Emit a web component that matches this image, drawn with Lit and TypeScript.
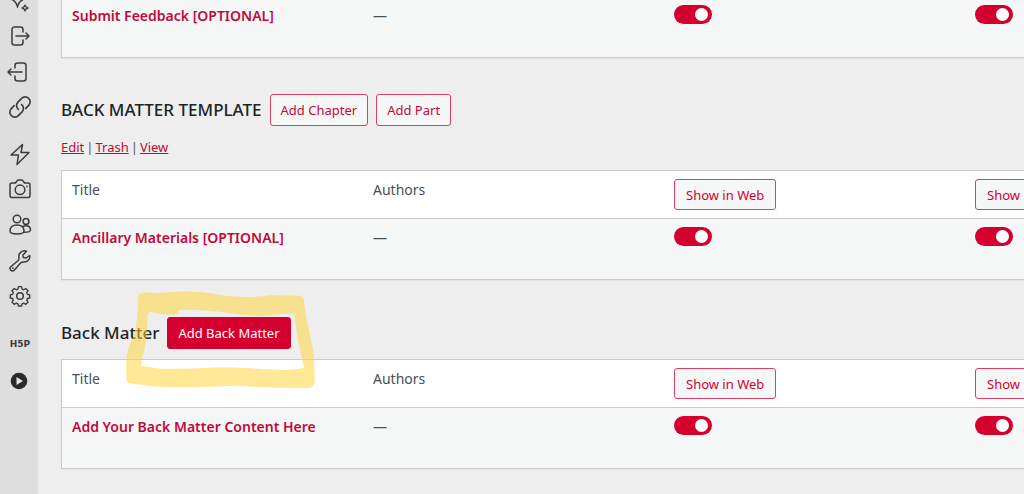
import { LitElement, html, css, svg, nothing } from "lit";
import { customElement, property } from "lit/decorators.js";

const icons = {
  sparkles: svg`<path d="M0 8.500c5.500 0 7.500-3 8.500-8 1 5 3 8 8.500 8-5.500 1-7.500 4-8.500 8.500-1-4.500-3-7.500-8.500-8.500zM16 15.200c.4 1.900 1 2.400 2.900 2.800-1.900.4-2.500 1-2.900 2.800-.4-1.800-1-2.400-2.900-2.800 1.900-.4 2.500-.9 2.900-2.800z"/>`,
  exit: svg`<path d="M14 7V4.500a2.500 2.500 0 0 0-2.500-2.500h-6A2.500 2.500 0 0 0 3 4.500v13A2.500 2.500 0 0 0 5.500 20h6a2.500 2.500 0 0 0 2.500-2.500V15M7 11h13M17 8l3 3-3 3"/>`,
  enter: svg`<path d="M6 7V4.500A2.500 2.500 0 0 1 8.500 2h6A2.500 2.500 0 0 1 17 4.500v13a2.500 2.500 0 0 1-2.500 2.500h-6A2.500 2.500 0 0 1 6 17.500V15M13 11H-1M2 8l-3 3 3 3"/>`,
  link: svg`<path d="M9.500 13.200a4.500 4.500 0 0 1-.6-6.400l3.600-3.700a4.500 4.500 0 0 1 6.400 6.400l-2.600 2.700M12.500 8.800a4.500 4.500 0 0 1 .6 6.400l-3.600 3.700a4.500 4.500 0 0 1-6.400-6.400l2.600-2.700" transform="translate(-1.100 -1.100) scale(1.100)"/>`,
  bolt: svg`<path d="M13.500 1.500 2 12h7.500L8 21.500 20 9.500h-8z"/>`,
  camera: svg`<path d="M6.500 5 8 2.800c.3-.5.800-.8 1.500-.8h3c.7 0 1.200.3 1.500.8L15.500 5H19a2 2 0 0 1 2 2v10.500a2 2 0 0 1-2 2H3a2 2 0 0 1-2-2V7a2 2 0 0 1 2-2z"/><circle cx="11" cy="11.800" r="4.800"/><circle cx="18" cy="8.500" r=".3"/>`,
  people: svg`<circle cx="8" cy="5" r="3.800"/><circle cx="17" cy="7.500" r="2.900"/><path d="M1 17c0-4 3-6 7-6s7 2 7 6c0 2-1.500 3-7 3s-7-1-7-3zM15 18.300c4.500 0 6.500-.3 6.500-2.300 0-3-2-4.300-4.500-4.300-1.500 0-2.500.4-3.300 1"/>`,
  wrench: svg`<path d="M20.700 5.500 17 8l-2.600-.4L14 5l3.500-3.700A5.500 5.500 0 0 0 10 7.500c0 1.500-.1 2.200-.8 3L1.800 16.800a2.400 2.400 0 0 0 3.400 3.400l6.600-7.400c.7-.7 1.400-.8 2.700-.8a5.500 5.500 0 0 0 6.200-6.500z"/><circle cx="3.800" cy="18.200" r=".3"/>`,
  gear: svg`<path d="M9.300 1.300h3.400l.6 2.600 1.800.8 2.300-1.400 2.400 2.400-1.400 2.300.7 1.700 2.600.6v3.400l-2.600.6-.7 1.700 1.400 2.300-2.400 2.400-2.300-1.400-1.800.8-.6 2.400H9.300l-.6-2.400-1.800-.8-2.300 1.400-2.400-2.400L3.600 16l-.7-1.700-2.600-.6v-3.400l2.600-.6.700-1.700-1.400-2.300 2.400-2.400 2.300 1.400 1.800-.8z" transform="translate(1 .5) scale(.91)"/><circle cx="11" cy="11" r="3.300"/>`,
  play: svg`<circle cx="10" cy="11" r="8.300" fill="#2b2b2b" stroke="none"/><path d="M7.500 7v8l6.500-4z" fill="#e6e6e6" stroke="none"/>`,
};

type IconName = keyof typeof icons;

@customElement("side-nav")
export class SideNav extends LitElement {
  static styles = css`
    :host {
      display: block;
      flex: none;
      width: 38px;
      background: #dedede;
    }
    .group {
      display: flex;
      flex-direction: column;
      margin-bottom: 11px;
    }
    .first { height: 142px; margin-top: -17px; }
    .second { height: 178px; }
    .third { height: 74px; }
    .item {
      display: flex;
      flex: 1;
      align-items: center;
      justify-content: center;
      padding-left: 2px;
      color: #3c3c3c;
      text-decoration: none;
    }
    .icon {
      width: 22px;
      height: 22px;
      fill: none;
      stroke: currentColor;
      stroke-width: 1.5;
      stroke-linecap: round;
      stroke-linejoin: round;
      overflow: visible;
    }
    .mark {
      font: 700 9px "DejaVu Sans", sans-serif;
    }
  `;

  private item(name: IconName, label: string) {
    return html`<a class="item" href="#" aria-label=${label}>
      <svg class="icon" viewBox="0 0 22 22" aria-hidden="true">${icons[name]}</svg>
    </a>`;
  }

  render() {
    return html`<nav aria-label="Admin menu">
      <div class="group first">
        ${this.item("sparkles", "Appearance")} ${this.item("exit", "Export")}
        ${this.item("enter", "Import")} ${this.item("link", "Links")}
      </div>
      <div class="group second">
        ${this.item("bolt", "Plugins")} ${this.item("camera", "Media")}
        ${this.item("people", "Users")} ${this.item("wrench", "Tools")}
        ${this.item("gear", "Settings")}
      </div>
      <div class="group third">
        <a class="item" href="#"><span class="mark">H5P</span></a>
        ${this.item("play", "Collapse menu")}
      </div>
    </nav>`;
  }
}

@customElement("matter-table")
export class MatterTable extends LitElement {
  @property() entry = "";
  @property({ type: Boolean }) continued = false;

  static styles = css`
    :host {
      display: block;
    }
    .table {
      width: 1507px;
      min-width: 100%;
      table-layout: fixed;
      border-collapse: separate;
      border-spacing: 0;
      border: 1px solid #c8cccc;
      background: #f6f8f8;
      box-shadow: 0 1px 1px rgba(0, 0, 0, 0.04);
      font-size: 14px;
      line-height: 22px;
      color: #4a4f55;
    }
    .continued {
      border-top: 0;
    }
    th,
    td {
      box-sizing: border-box;
      padding: 8px 10px;
      text-align: left;
      vertical-align: top;
      font-weight: 400;
    }
    th {
      height: 48px;
      background: #fff;
      border-bottom: 1px solid #c8cccc;
    }
    td {
      height: 60px;
    }
    .continued td {
      height: 57px;
      padding-top: 5px;
    }
    .title {
      color: #c2093a;
      font-weight: 600;
      text-decoration: none;
    }
    .button {
      display: block;
      box-sizing: border-box;
      height: 31px;
      padding: 0 11px;
      border: 1px solid #df3f64;
      border-radius: 3px;
      background: #f6f7f7;
      color: #d4002d;
      font: 13px "Noto Sans", sans-serif;
      white-space: nowrap;
    }
    .toggle {
      appearance: none;
      display: block;
      box-sizing: border-box;
      width: 38px;
      height: 19px;
      margin: 0;
      padding: 3px 4px;
      border-radius: 10px;
      background: #d4002d;
    }
    .toggle::before {
      content: "";
      display: block;
      width: 13px;
      height: 13px;
      border-radius: 50%;
      background: #fff;
    }
    .toggle:checked::before {
      margin-left: auto;
    }
  `;

  render() {
    const toggles = ["Show in Web", "Show in Exports", "Show Title"];
    return html`<table class="table ${this.continued ? "continued" : ""}">
      ${this.continued
        ? nothing
        : html`<thead>
            <tr>
              <th>Title</th>
              <th>Authors</th>
              ${toggles.map((t) => html`<th><button class="button">${t}</button></th>`)}
            </tr>
          </thead>`}
      <tbody>
        <tr>
          <td><a class="title" href="#">${this.entry}</a></td>
          <td>—</td>
          ${toggles.map(
            (t) => html`<td><input class="toggle" type="checkbox" aria-label=${t} checked /></td>`
          )}
        </tr>
      </tbody>
    </table>`;
  }
}

@customElement("app-root")
export class AppRoot extends LitElement {
  static styles = css`
    :host {
      display: flex;
      min-height: 100vh;
      background: #eee;
      font-family: "Noto Sans", sans-serif;
    }
    .main {
      flex: 1;
      min-width: 0;
      padding-left: 23px;
      overflow: hidden;
    }
    .section {
      padding-top: 36px;
    }
    .last {
      padding-top: 37px;
    }
    .head {
      position: relative;
      display: flex;
      align-items: center;
      gap: 8px;
      height: 32px;
      margin-bottom: 10px;
    }
    .heading {
      margin: 0;
      font-size: 17px;
      line-height: 24px;
      font-weight: 500;
      color: #1d2327;
      white-space: nowrap;
    }
    .button {
      box-sizing: border-box;
      height: 32px;
      padding: 0 10px;
      border: 1px solid #df3f64;
      border-radius: 3px;
      background: #f6f7f7;
      color: #c2093a;
      font: 13px "Noto Sans", sans-serif;
      white-space: nowrap;
    }
    .primary {
      border-color: #d4002d;
      background: #d4002d;
      color: #fff;
    }
    .links {
      display: flex;
      gap: 2px;
      margin-bottom: 12px;
      font-size: 13px;
      line-height: 22px;
      color: #50575e;
    }
    .links a {
      color: #c2093a;
    }
    .marker {
      position: absolute;
      left: 49px;
      top: -37px;
      width: 220px;
      height: 120px;
      fill: #ffd536;
      fill-opacity: 0.52;
      pointer-events: none;
    }
  `;

  render() {
    return html`
      <side-nav></side-nav>
      <main class="main">
        <matter-table continued entry="Submit Feedback [OPTIONAL]"></matter-table>
        <section class="section">
          <div class="head">
            <h2 class="heading">BACK MATTER TEMPLATE</h2>
            <button class="button">Add Chapter</button>
            <button class="button">Add Part</button>
          </div>
          <div class="links">
            <a href="#">Edit</a> | <a href="#">Trash</a> | <a href="#">View</a>
          </div>
          <matter-table entry="Ancillary Materials [OPTIONAL]"></matter-table>
        </section>
        <section class="section last">
          <div class="head">
            <h2 class="heading">Back Matter</h2>
            <button class="button primary">Add Back Matter</button>
            <svg class="marker" viewBox="0 0 660 360" aria-hidden="true">
              <path
                fill-rule="evenodd"
                d="M84 50Q88 38 105 37L148 39Q250 30 300 40C360 52 420 54 480 46L570 47Q581 50 582 60C586 110 600 160 608 205Q614 240 614 305Q612 322 595 324C500 326 420 320 380 317Q200 324 150 320C110 318 80 312 60 310Q49 306 49 296V238Q52 205 70 170C80 140 84 100 84 50Z
                M113 105Q116 95 124 95Q150 106 205 103V90C300 86 370 104 440 108C490 106 520 100 552 101Q558 140 564 180Q572 220 582 262Q570 270 520 270C450 268 400 262 330 262Q200 268 150 266Q110 260 93 257Q92 250 102 215Q112 170 113 105Z"
              />
            </svg>
          </div>
          <matter-table entry="Add Your Back Matter Content Here"></matter-table>
        </section>
      </main>
    `;
  }
}
